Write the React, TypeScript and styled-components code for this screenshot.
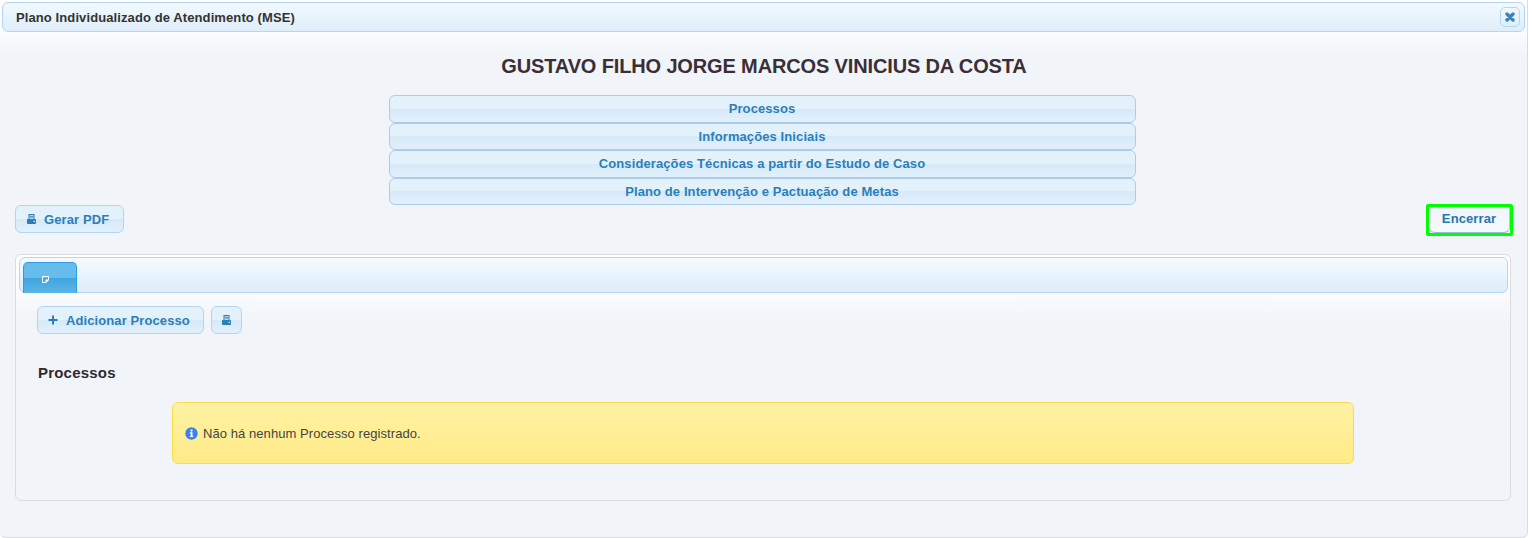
import React from "react";
import styled, { createGlobalStyle } from "styled-components";

const Global = createGlobalStyle`
  html, body { margin: 0; padding: 0; background: #fff; }
  body { font-family: "Liberation Sans", Arial, sans-serif; }
`;

const Dialog = styled.div`
  box-sizing: border-box;
  width: 1528px;
  height: 538px;
  padding: 2px 2px 0 2px;
  border-right: 1px solid #dcdcdc;
  border-bottom: 1px solid #dcdcdc;
  border-radius: 0 0 6px 6px;
  background: linear-gradient(to bottom, #fff 0, #f9fbfd 34px, #f1f4f8 58px);
`;

const TitleBar = styled.div`
  box-sizing: border-box;
  height: 30px;
  display: flex;
  align-items: center;
  justify-content: space-between;
  padding: 0 4px 0 13px;
  border: 1px solid #b4d6f0;
  border-radius: 6px;
  background: linear-gradient(to bottom, #f2f9fe, #dfeefa);
`;

const Title = styled.span`
  font-size: 13px;
  font-weight: bold;
  color: #333;
  letter-spacing: 0.1px;
`;

const CloseButton = styled.button`
  box-sizing: border-box;
  width: 20px;
  height: 20px;
  padding: 0;
  display: flex;
  align-items: center;
  justify-content: center;
  border: 1px solid #b4d6f0;
  border-radius: 5px;
  background: linear-gradient(to bottom, #f0f8fe, #dfeefa);
`;

const Content = styled.div`
  display: flex;
  flex-direction: column;
  padding: 0 14px 0 13px;
`;

const PersonName = styled.h1`
  margin: 22px 0 0;
  height: 24px;
  line-height: 24px;
  text-align: center;
  font-size: 20px;
  font-weight: bold;
  letter-spacing: -0.14px;
  color: #3a2f36;
  padding-left: 2px;
`;

const Accordion = styled.div`
  align-self: center;
  width: 747px;
  margin: 17px 0 0 -2px;
  display: flex;
  flex-direction: column;
`;

const AccordionItem = styled.div`
  box-sizing: border-box;
  height: 27.5px;
  display: flex;
  align-items: center;
  justify-content: center;
  border: 1px solid #a9cdea;
  border-radius: 6px;
  font-size: 13px;
  font-weight: bold;
  letter-spacing: 0.1px;
  color: #2b7fb8;
  background: linear-gradient(to bottom, #e3f1fb 0, #e3f1fb 50%, #d6e9f8 50%, #e2f0fb 100%);
`;

const ActionRow = styled.div`
  display: flex;
  justify-content: space-between;
  align-items: flex-start;
  height: 49px;
`;

const Button = styled.button<{ $wide?: boolean }>`
  box-sizing: border-box;
  height: 28px;
  display: inline-flex;
  align-items: center;
  gap: 8px;
  padding: ${(p) => (p.$wide ? "0 14px 0 11px" : "0 13px 0 10px")};
  border: 1px solid #b3d4ee;
  border-radius: 6px;
  font-family: inherit;
  font-size: 13px;
  font-weight: bold;
  letter-spacing: 0.1px;
  color: #2b7fb8;
  background: linear-gradient(to bottom, #e3f1fb 0, #e3f1fb 50%, #d6e9f8 50%, #e2f0fb 100%);
`;

const IconButton = styled(Button)`
  width: 31px;
  padding: 0;
  justify-content: center;
`;

const GreenFrame = styled.div`
  box-sizing: border-box;
  margin: -1px -2px 0 0;
  width: 87px;
  height: 32px;
  border: 3px solid #00ff00;
  border-radius: 2px;
  display: flex;
`;

const EndButton = styled.button`
  flex: 1;
  padding: 0 0 2px;
  border: none;
  border-right: 1px solid #a9cdea;
  border-bottom: 1px solid #8fbde3;
  border-radius: 0 0 6px 6px;
  font-family: inherit;
  font-size: 13px;
  font-weight: bold;
  letter-spacing: 0.1px;
  color: #2378ae;
  background: linear-gradient(to bottom, #eef5fb, #f7fafd);
`;

const Panel = styled.div`
  box-sizing: border-box;
  height: 247px;
  padding: 2px 2px 0 3px;
  border: 1px solid #dcdcdc;
  border-radius: 6px;
  background: linear-gradient(to bottom, #fff 0, #f9fbfd 40px, #f1f4f8 70px);
`;

const TabBar = styled.div`
  box-sizing: border-box;
  height: 36px;
  padding: 0 0 0 3px;
  display: flex;
  align-items: flex-end;
  border: 1px solid #b4d6f0;
  border-radius: 6px;
  background: linear-gradient(to bottom, #f5fafe, #ddedf9);
`;

const Tab = styled.div`
  box-sizing: border-box;
  width: 54px;
  height: 31px;
  margin-bottom: -1px;
  display: flex;
  align-items: center;
  justify-content: center;
  padding: 2px 9px 0 0;
  border: 1px solid #2e9be6;
  border-bottom: none;
  border-radius: 5px 5px 0 0;
  background: linear-gradient(to bottom, #66bceb 0, #66bceb 50%, #3fa5df 50%, #5ab5e8 100%);
`;

const Toolbar = styled.div`
  display: flex;
  gap: 7px;
  margin: 13px 0 0 18px;
`;

const SectionTitle = styled.h3`
  margin: 30px 0 0 19px;
  height: 18px;
  line-height: 18px;
  font-size: 15px;
  font-weight: bold;
  letter-spacing: 0.2px;
  color: #2f2a30;
`;

const Alert = styled.div`
  box-sizing: border-box;
  width: 1182px;
  height: 62px;
  margin: 20px 0 0 153px;
  padding: 1px 12px 0;
  display: flex;
  align-items: center;
  gap: 5px;
  border: 1px solid #fadb45;
  border-radius: 6px;
  font-size: 13px;
  letter-spacing: 0.07px;
  color: #444;
  background: linear-gradient(to bottom, #fff2a4, #ffeb87);
`;

const PrintIcon = () => (
  <svg width="9" height="10" viewBox="0 0 9 10" aria-hidden="true">
    <path
      fill="#2b7fb8"
      fillRule="evenodd"
      d="M1.5 0h6v5h-1V1.2h-4V5h-1zM2.8 2h3.4v.8H2.8zM2.8 3.4h3.4v.8H2.8z"
    />
    <path fill="#2b7fb8" d="M.8 5h7.4a.8.8 0 0 1 .8.8v3.4a.8.8 0 0 1-.8.8H.8a.8.8 0 0 1-.8-.8V5.800a.8.8 0 0 1 .8-.8z" />
    <rect x="6.600" y="6.800" width="1.400" height="1.200" fill="#e3f1fb" />
  </svg>
);

const PlusIcon = () => (
  <svg width="10" height="10" viewBox="0 0 10 10" aria-hidden="true">
    <path fill="#2b7fb8" d="M4 0.5h2V4h3.5v2H6v3.5H4V6H0.5V4H4z" />
  </svg>
);

const CloseIcon = () => (
  <svg width="10" height="10" viewBox="0 0 10 10" aria-hidden="true">
    <path d="M2 2l6 6M8 2l-6 6" stroke="#3f84bd" strokeWidth="3.400" strokeLinecap="round" fill="none" />
  </svg>
);

const NoteIcon = () => (
  <svg width="7" height="7" viewBox="0 0 7 7" aria-hidden="true">
    <path fill="none" stroke="#fff" strokeWidth="1" d="M.5.5h6v3.500L4 6.500H.5z" />
    <path fill="#fff" d="M3.500 3.500H7L3.500 7z" />
  </svg>
);

const InfoIcon = () => (
  <svg width="13" height="13" viewBox="0 0 13 13" aria-hidden="true">
    <circle cx="6.500" cy="6.500" r="6.200" fill="#3b82f0" />
    <rect x="5.500" y="2.400" width="2" height="2" rx=".4" fill="#fff" />
    <path fill="#fff" d="M4.900 5.300h2.600v3.700h.8v1.100H4.800V9h.9V6.400h-.8z" />
  </svg>
);

const sections = [
  "Processos",
  "Informações Iniciais",
  "Considerações Técnicas a partir do Estudo de Caso",
  "Plano de Intervenção e Pactuação de Metas",
];

export default function App() {
  return (
    <Dialog>
      <Global />
      <TitleBar>
        <Title>Plano Individualizado de Atendimento (MSE)</Title>
        <CloseButton aria-label="Fechar">
          <CloseIcon />
        </CloseButton>
      </TitleBar>
      <Content>
        <PersonName>GUSTAVO FILHO JORGE MARCOS VINICIUS DA COSTA</PersonName>
        <Accordion>
          {sections.map((s) => (
            <AccordionItem key={s}>{s}</AccordionItem>
          ))}
        </Accordion>
        <ActionRow>
          <Button $wide>
            <PrintIcon />
            Gerar PDF
          </Button>
          <GreenFrame>
            <EndButton>Encerrar</EndButton>
          </GreenFrame>
        </ActionRow>
        <Panel>
          <TabBar>
            <Tab>
              <NoteIcon />
            </Tab>
          </TabBar>
          <Toolbar>
            <Button>
              <PlusIcon />
              Adicionar Processo
            </Button>
            <IconButton aria-label="Imprimir">
              <PrintIcon />
            </IconButton>
          </Toolbar>
          <SectionTitle>Processos</SectionTitle>
          <Alert>
            <InfoIcon />
            Não há nenhum Processo registrado.
          </Alert>
        </Panel>
      </Content>
    </Dialog>
  );
}
